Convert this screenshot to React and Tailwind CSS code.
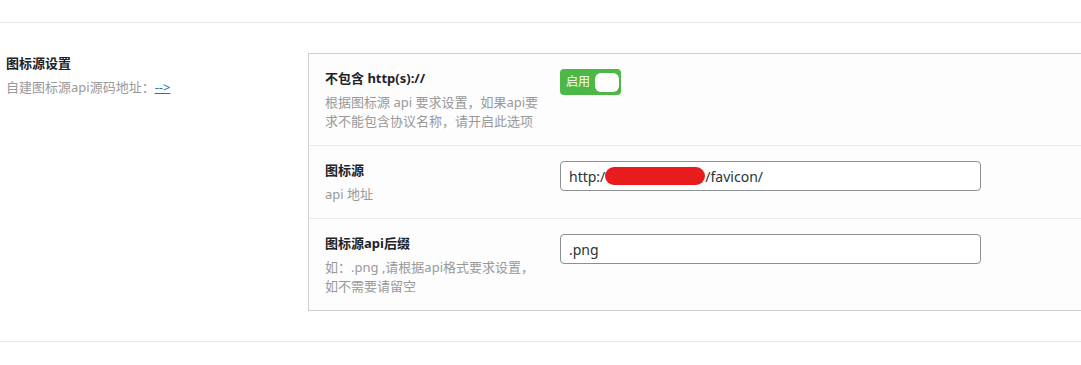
import React, { useState } from 'react';

const font = { fontFamily: '"Noto Sans", "Noto Sans CJK SC", sans-serif' };

const Row = ({ title, desc, children, last, h }) => (
  <div className={`flex ${h} ${last ? '' : 'border-b border-[#eaeaea]'}`}>
    <div className="w-[251px] shrink-0 pl-[16px] pr-[10px] pt-[14px]">
      <div className="text-[13px] leading-[20px] font-bold text-[#1d2327]">{title}</div>
      <div className="mt-[5px] text-[13px] leading-[19px] text-[#999] w-[214px]">{desc}</div>
    </div>
    <div className="flex-1 pt-[15px]">{children}</div>
  </div>
);

const Toggle = () => {
  const [on, setOn] = useState(true);
  return (
    <button
      onClick={() => setOn(!on)}
      className="flex items-center h-[26px] w-[61px] rounded-[4px] bg-[#4cb848] pl-[6px] pr-[4px] gap-[5px]"
    >
      <span className="text-[12px] leading-none text-white whitespace-nowrap">启用</span>
      <span className="h-[19px] w-[24px] shrink-0 rounded-[6px] bg-white" />
    </button>
  );
};

export default function App() {
  return (
    <div className="w-[1081px] h-[365px] bg-white overflow-hidden" style={font}>
      <div className="h-[23px] border-b border-[#e8e8e8]" />
      <div className="flex pt-[30px] pb-[30px] border-b border-[#e8e8e8]">
        <div className="w-[308px] shrink-0 pl-[6px] pt-[1px]">
          <div className="text-[13px] leading-[18px] font-bold text-[#1d2327]">图标源设置</div>
          <div className="mt-[6px] text-[13px] leading-[18px] text-[#999]">
            自建图标源api源码地址：
            <a href="#" className="text-[#2271b1] underline">--&gt;</a>
          </div>
        </div>
        <div className="w-[800px] shrink-0 border border-[#ccd0d4] bg-[#fdfdfd]">
          <Row
            h="h-[92px]"
            title="不包含 http(s)://"
            desc="根据图标源 api 要求设置，如果api要求不能包含协议名称，请开启此选项"
          >
            <Toggle />
          </Row>
          <Row h="h-[73px]" title="图标源" desc="api 地址">
            <div className="flex items-center w-[421px] h-[30px] rounded-[4px] border border-[#8c8f94] bg-white px-[8px] text-[14px] text-[#2c3338]">
              <span>http:/</span>
              <span className="inline-block h-[18px] w-[100px] rounded-full bg-[#e81c1c]" />
              <span>/favicon/</span>
            </div>
          </Row>
          <Row
            h="h-[91px]"
            last
            title="图标源api后缀"
            desc="如：.png ,请根据api格式要求设置，如不需要请留空"
          >
            <div className="flex items-center w-[421px] h-[30px] rounded-[4px] border border-[#8c8f94] bg-white px-[8px] text-[14px] text-[#2c3338]">
              .png
            </div>
          </Row>
        </div>
      </div>
    </div>
  );
}
